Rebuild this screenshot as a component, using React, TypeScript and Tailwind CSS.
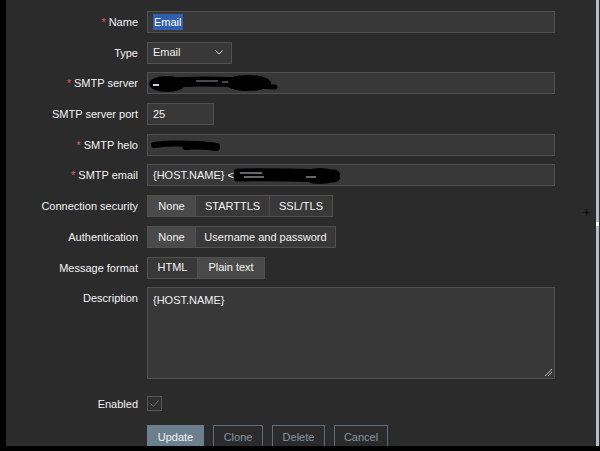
import type { ReactNode } from "react";

const inputBox =
  "h-[22px] bg-[#383838] border border-[#505050] flex items-center px-[5px] text-[#f2f2f2] overflow-hidden";

function Row({ label, required, children, top }: { label: string; required?: boolean; children: ReactNode; top?: boolean }) {
  return (
    <div className={`flex ${top ? "items-start" : "items-center"}`}>
      <div className="w-[132px] h-[22px] leading-[22px] text-right text-[#f4f4f4] whitespace-nowrap">
        {required && <span className="text-[#e45959] mr-[3px]">*</span>}
        {label}
      </div>
      <div className="ml-[9px]">{children}</div>
    </div>
  );
}

function Segments({ items, active, widths }: { items: string[]; active: number; widths: string[] }) {
  return (
    <div className="flex h-[22px] border border-[#4f4f4f]">
      {items.map((it, i) => (
        <div
          key={it}
          className={`${widths[i]} flex items-center justify-center text-[#f4f4f4] ${
            i > 0 ? "border-l border-[#4f4f4f]" : ""
          } ${i === active ? "bg-[#4a4a4a]" : "bg-[#383838]"}`}
        >
          {it}
        </div>
      ))}
    </div>
  );
}

function Scribble({ kind }: { kind: "server" | "helo" | "email" }) {
  if (kind === "server") {
    return (
      <svg width="130" height="20" viewBox="0 0 130 20" className="-ml-[5px]">
        <ellipse cx="19" cy="11" rx="18" ry="8" fill="#000" />
        <path d="M20 10 C 45 7, 70 9, 95 9" stroke="#000" strokeWidth="10" strokeLinecap="round" fill="none" />
        <ellipse cx="100" cy="10" rx="23" ry="8" fill="#000" />
        <path d="M110 13 L 127 14" stroke="#000" strokeWidth="5" strokeLinecap="round" />
        <path d="M5 12 h6" stroke="#cfd4d8" strokeWidth="2" />
        <path d="M48 8 h22 M74 9 h6" stroke="#8e959b" strokeWidth="1" />
      </svg>
    );
  }
  if (kind === "helo") {
    return (
      <svg width="70" height="20" viewBox="0 0 70 20" className="-ml-[3px]">
        <path d="M4 10 C 20 8, 40 8, 66 11" stroke="#000" strokeWidth="6" strokeLinecap="round" fill="none" />
        <path d="M36 11 C 48 10, 58 11, 66 12" stroke="#000" strokeWidth="8" strokeLinecap="round" fill="none" />
      </svg>
    );
  }
  return (
    <svg width="106" height="20" viewBox="0 0 106 20">
      <path d="M4 10 C 30 9, 60 10, 100 11" stroke="#000" strokeWidth="13" strokeLinecap="round" fill="none" />
      <ellipse cx="86" cy="11" rx="18" ry="8" fill="#000" />
      <path d="M6 8 h22 M10 12 h20 M72 12 h10" stroke="#c8ccd0" strokeWidth="1" />
    </svg>
  );
}

export default function App() {
  return (
    <div className="w-[600px] h-[451px] bg-black font-['Liberation_Sans',Arial,sans-serif] text-[11px] overflow-hidden">
      <div className="flex h-[446px]">
        <div className="w-[6px] bg-black" />
        <div className="relative flex-1 bg-[#2b2b2b] pt-[11px] overflow-hidden">
          <div className="flex flex-col gap-[8.7px]">
            <Row label="Name" required>
              <div className={`${inputBox} w-[408px] border-[#8b96a0]`}>
                <span className="bg-[#2f5fae] text-white px-[1px]">Email</span>
              </div>
            </Row>
            <Row label="Type">
              <div className={`${inputBox} w-[85px] justify-between pr-[8px]`}>
                <span>Email</span>
                <svg width="8" height="5" viewBox="0 0 8 5">
                  <path d="M0.5 0.5 L4 4 L7.5 0.5" stroke="#d8d8d8" strokeWidth="1" fill="none" />
                </svg>
              </div>
            </Row>
            <Row label="SMTP server" required>
              <div className={`${inputBox} w-[408px]`}>
                <Scribble kind="server" />
              </div>
            </Row>
            <Row label="SMTP server port">
              <div className={`${inputBox} w-[67px]`}>25</div>
            </Row>
            <Row label="SMTP helo" required>
              <div className={`${inputBox} w-[408px]`}>
                <Scribble kind="helo" />
              </div>
            </Row>
            <Row label="SMTP email" required>
              <div className={`${inputBox} w-[408px]`}>
                <span className="whitespace-pre">{"{HOST.NAME} <"}</span>
                <Scribble kind="email" />
              </div>
            </Row>
            <Row label="Connection security">
              <Segments items={["None", "STARTTLS", "SSL/TLS"]} active={0} widths={["w-[47px]", "w-[74px]", "w-[63px]"]} />
            </Row>
            <Row label="Authentication">
              <Segments items={["None", "Username and password"]} active={0} widths={["w-[47px]", "w-[140px]"]} />
            </Row>
            <Row label="Message format">
              <Segments items={["HTML", "Plain text"]} active={1} widths={["w-[49px]", "w-[67px]"]} />
            </Row>
            <Row label="Description" top>
              <div className="relative w-[408px] h-[92px] bg-[#383838] border border-[#505050] px-[5px] pt-[4px] text-[#f2f2f2]">
                {"{HOST.NAME}"}
                <svg width="9" height="9" viewBox="0 0 9 9" className="absolute right-[1px] bottom-[1px]">
                  <path d="M1 8 L8 1 M4 8 L8 4" stroke="#bdbdbd" strokeWidth="1" />
                </svg>
              </div>
            </Row>
          </div>
          <div className="mt-[13.7px]">
            <Row label="Enabled">
              <div className="w-[15px] h-[15px] border border-[#575757] bg-[#2f2f2f] flex items-center justify-center">
                <svg width="11" height="9" viewBox="0 0 11 9">
                  <path d="M1.5 4.5 L4.5 7.5 L9.5 1.5" stroke="#6e6e6e" strokeWidth="1" fill="none" />
                </svg>
              </div>
            </Row>
          </div>
          <div className="mt-[10px] ml-[141px] flex gap-[9px]">
            <div className="w-[57px] h-[24px] bg-[#6b7f8d] text-[#eef1f3] flex items-center justify-center">Update</div>
            <div className="w-[50px] h-[24px] border border-[#5c6e7b] text-[#8796a1] flex items-center justify-center">Clone</div>
            <div className="w-[53px] h-[24px] border border-[#5c6e7b] text-[#8796a1] flex items-center justify-center">Delete</div>
            <div className="w-[54px] h-[24px] border border-[#5c6e7b] text-[#8796a1] flex items-center justify-center">Cancel</div>
          </div>
          <svg width="7" height="7" viewBox="0 0 7 7" className="absolute left-[577px] top-[209px]">
            <path d="M3.5 0.5 V6.5 M0.5 3.5 H6.5" stroke="#000" strokeWidth="1" />
          </svg>
        </div>
        <div className="relative w-[3px] bg-[#b7bbcd]">
          <div className="absolute left-0 top-[222px] w-[3px] h-[4px] bg-white" />
        </div>
        <div className="w-[1px] bg-[#2b2b2b]" />
      </div>
    </div>
  );
}
